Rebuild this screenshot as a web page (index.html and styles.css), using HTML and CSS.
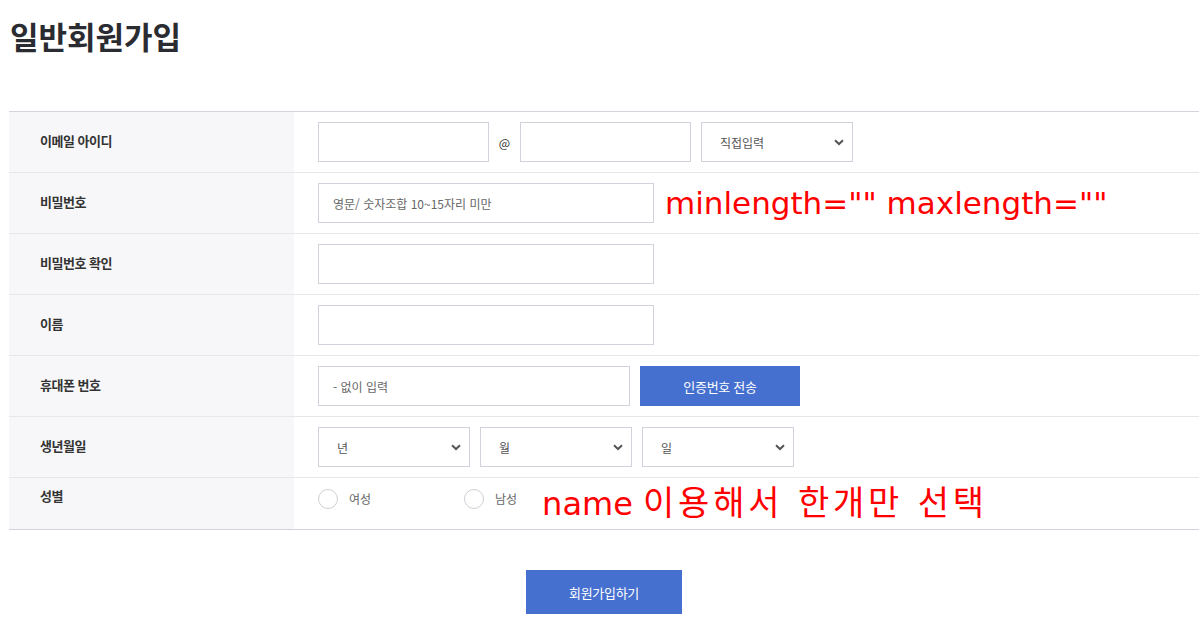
FILE: index.html
```html
<!DOCTYPE html>
<html lang="ko">
<head>
<meta charset="utf-8">
<title>일반회원가입</title>
<link rel="stylesheet" href="styles.css">
</head>
<body>
<div class="page">
  <h1 class="title">일반회원가입</h1>
  <div class="form">
    <div class="row">
      <div class="label">이메일 아이디</div>
      <div class="field">
        <input class="input w171" type="text">
        <span class="at">@</span>
        <input class="input w171" type="text">
        <span class="select-wrap gap-l">
          <select class="select"><option>직접입력</option></select>
          <svg class="chev" width="10" height="7" viewBox="0 0 10 7"><path d="M1 1.2 L5 5 L9 1.2" fill="none" stroke="#555" stroke-width="2"/></svg>
        </span>
      </div>
    </div>
    <div class="row">
      <div class="label">비밀번호</div>
      <div class="field">
        <input class="input w336" type="password" placeholder="영문/ 숫자조합 10~15자리 미만">
        <span class="note note-en">minlength="" maxlength=""</span>
      </div>
    </div>
    <div class="row">
      <div class="label">비밀번호 확인</div>
      <div class="field">
        <input class="input w336" type="password">
      </div>
    </div>
    <div class="row">
      <div class="label">이름</div>
      <div class="field">
        <input class="input w336" type="text">
      </div>
    </div>
    <div class="row">
      <div class="label">휴대폰 번호</div>
      <div class="field gap10">
        <input class="input w312" type="text" placeholder="- 없이 입력">
        <button class="btn" type="button">인증번호 전송</button>
      </div>
    </div>
    <div class="row">
      <div class="label">생년월일</div>
      <div class="field gap10">
        <span class="select-wrap">
          <select class="select"><option>년</option></select>
          <svg class="chev" width="10" height="7" viewBox="0 0 10 7"><path d="M1 1.2 L5 5 L9 1.2" fill="none" stroke="#555" stroke-width="2"/></svg>
        </span>
        <span class="select-wrap">
          <select class="select"><option>월</option></select>
          <svg class="chev" width="10" height="7" viewBox="0 0 10 7"><path d="M1 1.2 L5 5 L9 1.2" fill="none" stroke="#555" stroke-width="2"/></svg>
        </span>
        <span class="select-wrap">
          <select class="select"><option>일</option></select>
          <svg class="chev" width="10" height="7" viewBox="0 0 10 7"><path d="M1 1.2 L5 5 L9 1.2" fill="none" stroke="#555" stroke-width="2"/></svg>
        </span>
      </div>
    </div>
    <div class="row row-last">
      <div class="label label-top">성별</div>
      <div class="field field-top">
        <label class="radio"><input type="radio" name="gender"><span>여성</span></label>
        <label class="radio"><input type="radio" name="gender"><span>남성</span></label>
        <span class="note note-ko">name <span class="ko">이용해서 한개만 선택</span></span>
      </div>
    </div>
  </div>
  <div class="actions">
    <button class="submit" type="button">회원가입하기</button>
  </div>
</div>
</body>
</html>
```
FILE: styles.css
```css
html, body {
  margin: 0;
  padding: 0;
  background: #fff;
}
body {
  font-family: "Noto Sans CJK KR", "Noto Sans", sans-serif;
  color: #333;
}
.page {
  width: 1190px;
  margin-left: 9px;
}
.title {
  margin: 0;
  padding: 16px 0 0 1px;
  height: 111px;
  box-sizing: border-box;
  font-size: 31px;
  line-height: 40px;
  font-weight: 700;
  color: #2a2c31;
  letter-spacing: 0;
}
.form {
  border-top: 1px solid #d3d3dc;
  border-bottom: 1px solid #d3d3dc;
}
.row {
  display: flex;
  height: 61px;
  box-sizing: border-box;
  border-bottom: 1px solid #e6e6eb;
}
.row-last {
  height: 51px;
  border-bottom: none;
}
.label {
  width: 285px;
  flex: none;
  box-sizing: border-box;
  padding-left: 31px;
  padding-bottom: 3px;
  background: #f7f7f9;
  display: flex;
  align-items: center;
  font-size: 13px;
  font-weight: 700;
  letter-spacing: -0.5px;
  color: #333;
}
.label-top {
  align-items: flex-start;
  padding-top: 8px;
  padding-bottom: 0;
  line-height: 20px;
}
.field {
  flex: 1;
  display: flex;
  align-items: center;
  padding: 0 24px;
}
.field-top {
  align-items: flex-start;
  padding-top: 11px;
}
.gap10 {
  gap: 10px;
}
.input {
  height: 40px;
  box-sizing: border-box;
  border: 1px solid #d2d2dc;
  border-radius: 0;
  padding: 0 14px;
  font-family: inherit;
  font-size: 12px;
  color: #333;
  background: #fff;
  outline: none;
}
.input::placeholder {
  color: #666;
}
.w171 { width: 171px; }
.w312 { width: 312px; }
.w336 { width: 336px; }
.at {
  width: 31px;
  text-align: center;
  font-size: 12px;
  color: #333;
}
.gap-l {
  margin-left: 10px;
}
.select-wrap {
  position: relative;
  display: inline-block;
  width: 152px;
  height: 40px;
}
.select {
  appearance: none;
  -webkit-appearance: none;
  width: 152px;
  height: 40px;
  box-sizing: border-box;
  border: 1px solid #d2d2dc;
  border-radius: 0;
  padding: 0 18px;
  font-family: inherit;
  font-size: 12px;
  color: #555;
  background: #fff;
  outline: none;
}
.chev {
  position: absolute;
  right: 9px;
  top: 17px;
  pointer-events: none;
}
.btn {
  width: 160px;
  height: 40px;
  border: none;
  background: #4670cf;
  color: #fff;
  font-family: inherit;
  font-size: 13px;
  letter-spacing: -0.3px;
}
.note {
  color: #ff0000;
  font-weight: 400;
  white-space: nowrap;
}
.note-en {
  margin-left: 11px;
  font-family: "DejaVu Sans", "Noto Sans CJK KR", sans-serif;
  font-size: 31px;
  line-height: 40px;
}
.note-ko {
  margin-left: 25px;
  margin-top: -4px;
  font-family: "DejaVu Sans", "Noto Sans CJK KR", sans-serif;
  font-size: 32px;
  line-height: 36px;
}
.note-ko .ko {
  font-size: 34px;
  letter-spacing: 3.8px;
}
.radio {
  width: 146px;
  display: inline-flex;
  align-items: center;
  gap: 11px;
  font-size: 12px;
  color: #666;
  height: 20px;
}
.radio:last-of-type {
  width: auto;
}
.radio input {
  appearance: none;
  -webkit-appearance: none;
  margin: 0;
  width: 20px;
  height: 20px;
  border: 1px solid #cfcfd6;
  border-radius: 50%;
  background: #fff;
  box-sizing: border-box;
}
.radio span {
  line-height: 20px;
}
.actions {
  display: flex;
  justify-content: center;
  padding-top: 40px;
}
.submit {
  width: 156px;
  height: 44px;
  border: none;
  background: #4670cf;
  color: #fff;
  font-family: inherit;
  font-size: 13px;
  letter-spacing: -0.3px;
}
```
